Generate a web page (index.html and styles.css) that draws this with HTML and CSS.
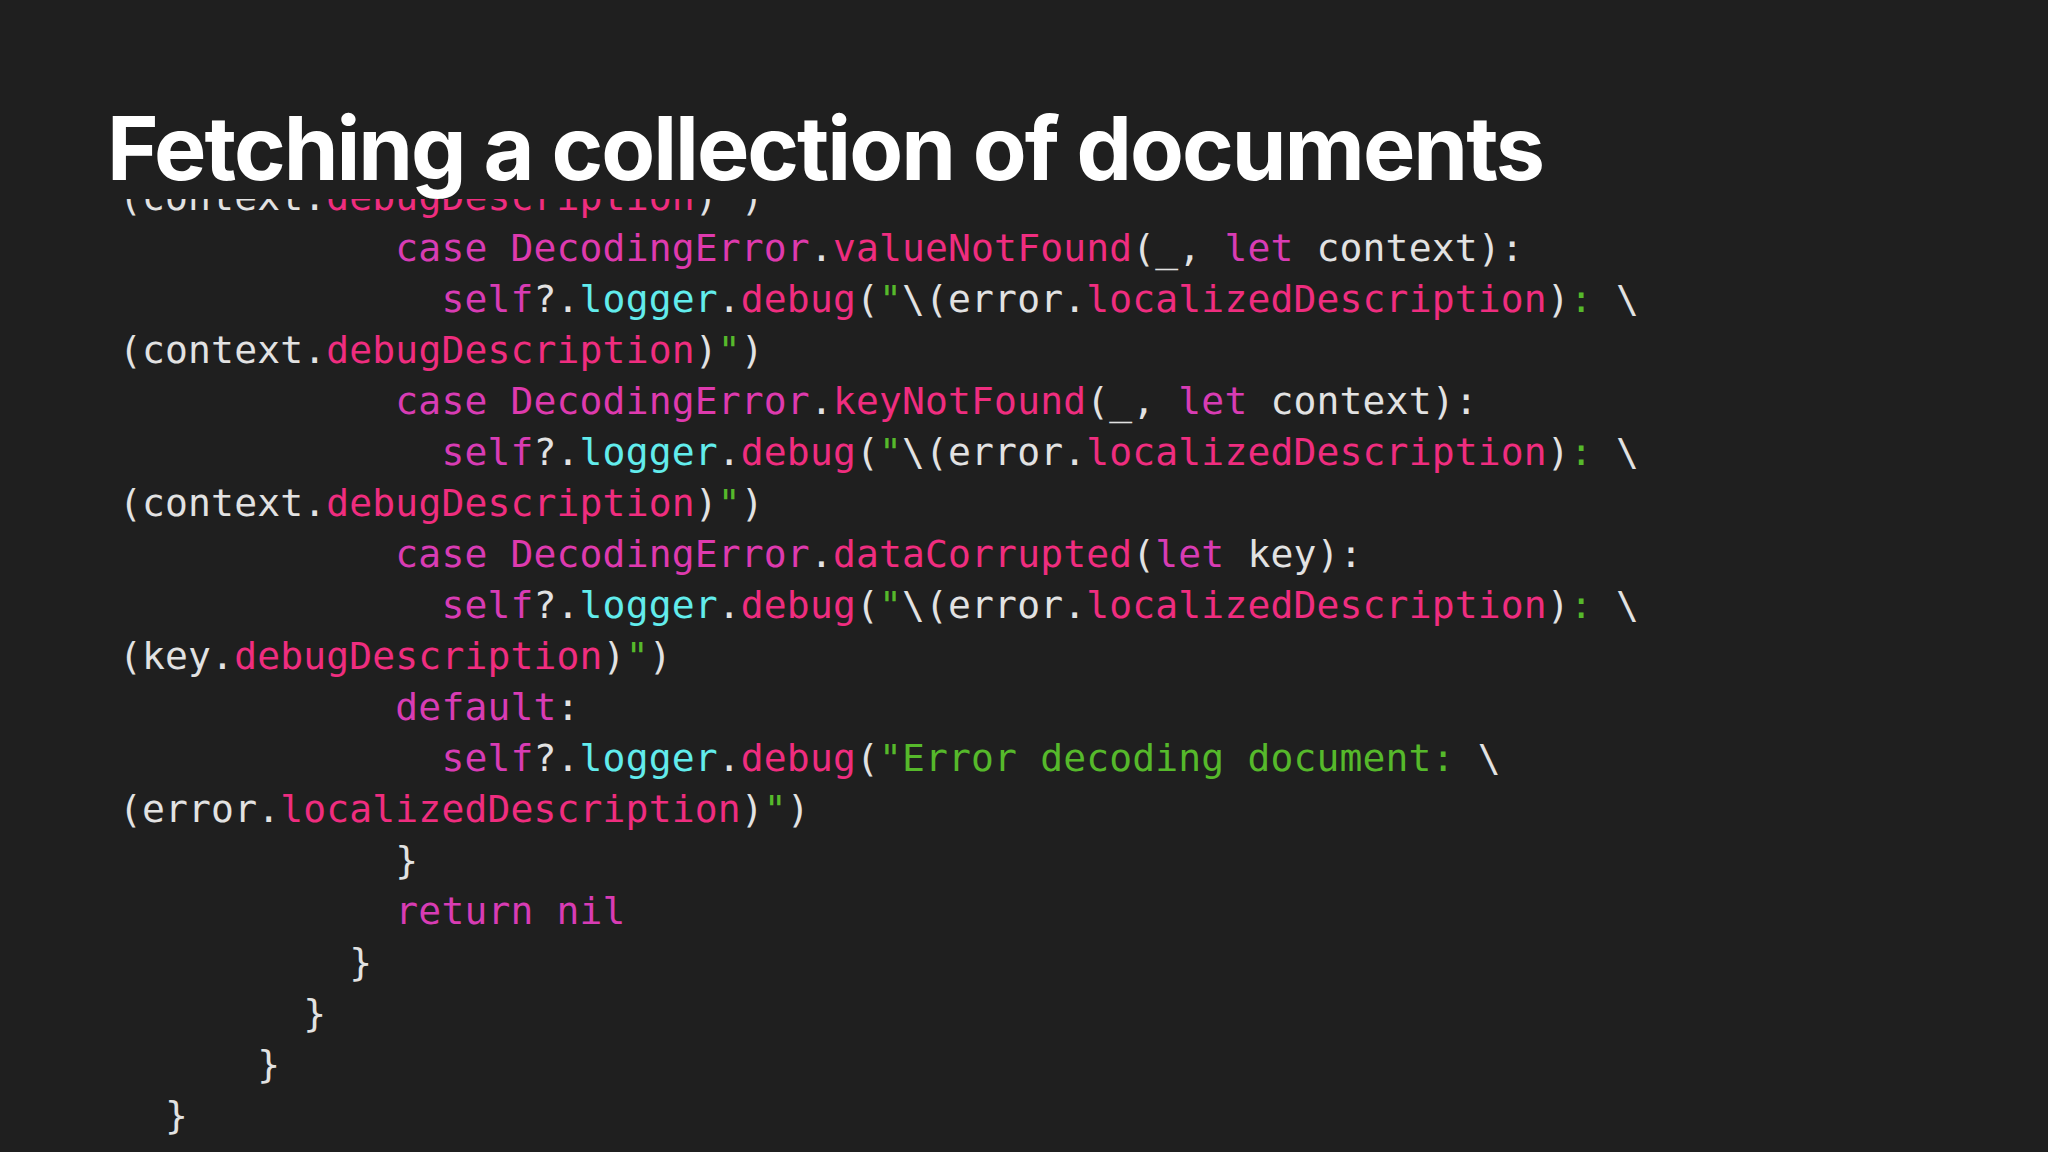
FILE: index.html
```html
<!DOCTYPE html>
<html lang="en">
<head>
    <meta charset="UTF-8">
    <meta name="viewport" content="width=device-width, initial-scale=1.0">
    <title>Fetching a collection of documents</title>
    <link rel="stylesheet" href="styles.css">
</head>
<body>
    <div class="slide">
        <header class="slide-header">
            <h1>Fetching a collection of documents</h1>
        </header>
        <div class="code-view">
<pre class="code">(context.<span class="fn">debugDescription</span>)<span class="str">"</span>)
            <span class="kw">case</span> <span class="ty">DecodingError</span>.<span class="fn">valueNotFound</span>(_, <span class="kw">let</span> context):
              <span class="kw">self</span>?.<span class="prop">logger</span>.<span class="fn">debug</span>(<span class="str">"</span>\(error.<span class="fn">localizedDescription</span>)<span class="str">:</span> \
(context.<span class="fn">debugDescription</span>)<span class="str">"</span>)
            <span class="kw">case</span> <span class="ty">DecodingError</span>.<span class="fn">keyNotFound</span>(_, <span class="kw">let</span> context):
              <span class="kw">self</span>?.<span class="prop">logger</span>.<span class="fn">debug</span>(<span class="str">"</span>\(error.<span class="fn">localizedDescription</span>)<span class="str">:</span> \
(context.<span class="fn">debugDescription</span>)<span class="str">"</span>)
            <span class="kw">case</span> <span class="ty">DecodingError</span>.<span class="fn">dataCorrupted</span>(<span class="kw">let</span> key):
              <span class="kw">self</span>?.<span class="prop">logger</span>.<span class="fn">debug</span>(<span class="str">"</span>\(error.<span class="fn">localizedDescription</span>)<span class="str">:</span> \
(key.<span class="fn">debugDescription</span>)<span class="str">"</span>)
            <span class="kw">default</span>:
              <span class="kw">self</span>?.<span class="prop">logger</span>.<span class="fn">debug</span>(<span class="str">"Error decoding document: </span>\
(error.<span class="fn">localizedDescription</span>)<span class="str">"</span>)
            }
            <span class="kw">return nil</span>
          }
        }
      }
  }</pre>
        </div>
    </div>
</body>
</html>
```

FILE: styles.css
```css
* {
    margin: 0;
    padding: 0;
    box-sizing: border-box;
}

body {
    background: #1f1f1f;
    width: 2048px;
    height: 1152px;
    overflow: hidden;
}

.slide {
    display: flex;
    flex-direction: column;
    height: 100%;
}

.slide-header {
    height: 199px;
    padding: 104px 0 0 107px;
    background: #1f1f1f;
    flex-shrink: 0;
}

.slide-header h1 {
    font-family: Inter, "Open Sans", sans-serif;
    font-weight: 700;
    font-size: 88px;
    line-height: 88px;
    letter-spacing: -2px;
    color: #ffffff;
    white-space: nowrap;
}

.code-view {
    flex: 1;
    overflow: hidden;
    padding-left: 119px;
}

.code {
    margin-top: -27px;
    font-family: "DejaVu Sans Mono", monospace;
    font-size: 38px;
    line-height: 51px;
    letter-spacing: 0.15px;
    color: #e2e2e2;
}

.kw {
    color: #d83cb4;
}

.ty {
    color: #de3aae;
}

.fn {
    color: #ef2d7f;
}

.prop {
    color: #62ecec;
}

.str {
    color: #56b92b;
}
```
